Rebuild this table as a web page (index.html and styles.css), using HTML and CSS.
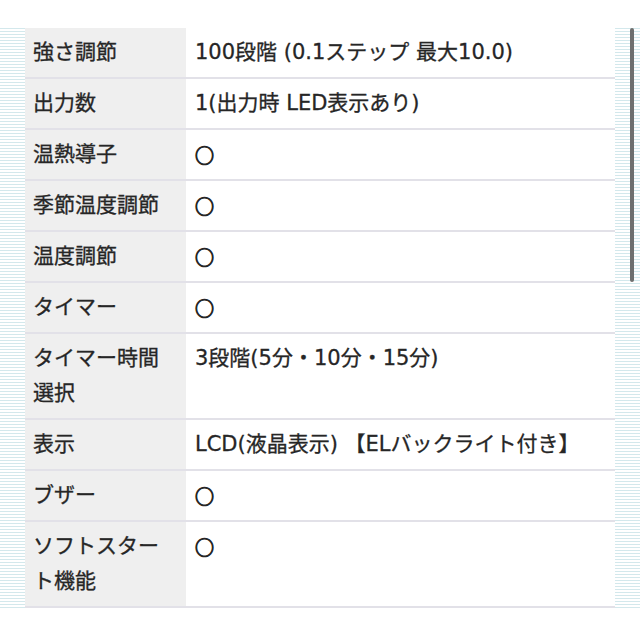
FILE: index.html
```html
<!DOCTYPE html>
<html lang="ja">
<head>
<meta charset="utf-8">
<link rel="stylesheet" href="styles.css">
</head>
<body>
<div class="page">
  <div class="stripes">
    <table class="spec">
      <tr><th>強さ調節</th><td>100段階 (0.1ステップ 最大10.0)</td></tr>
      <tr><th>出力数</th><td>1(出力時 LED表示あり)</td></tr>
      <tr><th>温熱導子</th><td><span class="mark">○</span></td></tr>
      <tr><th>季節温度調節</th><td><span class="mark">○</span></td></tr>
      <tr><th>温度調節</th><td><span class="mark">○</span></td></tr>
      <tr><th>タイマー</th><td><span class="mark">○</span></td></tr>
      <tr><th>タイマー時間<br>選択</th><td>3段階(5分・10分・15分)</td></tr>
      <tr><th>表示</th><td>LCD(液晶表示) 【ELバックライト付き】</td></tr>
      <tr><th>ブザー</th><td><span class="mark">○</span></td></tr>
      <tr><th>ソフトスター<br>ト機能</th><td><span class="mark">○</span></td></tr>
    </table>
  </div>
  <div class="scrollbar"></div>
</div>
</body>
</html>
```
FILE: styles.css
```css
html, body {
  margin: 0;
  padding: 0;
  background: #ffffff;
}
.page {
  position: relative;
  width: 640px;
  height: 640px;
  padding-top: 28px;
  box-sizing: border-box;
  overflow: hidden;
}
.stripes {
  padding: 0 25px 2px;
  background: repeating-linear-gradient(to bottom, #d3e8ec 0px, #d3e8ec 1px, #ffffff 1px, #ffffff 3px);
}
.spec {
  width: 590px;
  border-collapse: collapse;
  background: #ffffff;
  font-family: "DejaVu Sans", "Noto Sans CJK JP", sans-serif;
  font-size: 21px;
  line-height: 35px;
  color: #262626;
  -webkit-text-stroke: 0.3px #262626;
}
.spec th, .spec td {
  text-align: left;
  vertical-align: top;
  font-weight: normal;
  padding: 7px 8px 7px 8px;
  border-bottom: 2px solid #e2e1e8;
}
.spec th {
  width: 145px;
  background: #efefef;
}
.spec td {
  padding-left: 9px;
}
.mark {
  display: inline-block;
  font-family: "Noto Sans CJK JP", sans-serif;
  font-size: 19px;
  line-height: 35px;
  vertical-align: top;
  -webkit-text-stroke: 1.1px #262626;
}
.scrollbar {
  position: absolute;
  left: 630px;
  top: 28px;
  width: 4px;
  height: 254px;
  border-radius: 2px;
  background: #6f6f6f;
}
```
